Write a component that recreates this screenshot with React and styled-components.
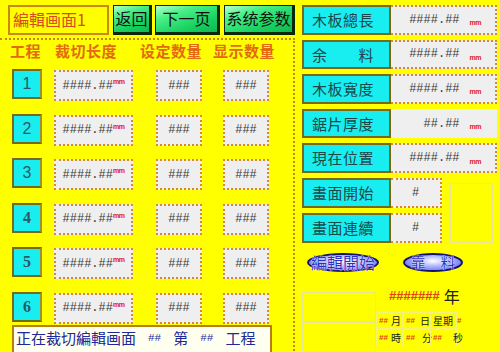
import React from 'react'
import styled, { createGlobalStyle } from 'styled-components'

const GlobalStyle = createGlobalStyle`
  html, body {
    margin: 0;
    padding: 0;
    background: #ffff00;
  }
  body {
    font-family: 'Noto Sans CJK SC', 'Noto Sans CJK TC', sans-serif;
  }
`

const Screen = styled.div`
  width: 500px;
  height: 352px;
  overflow: hidden;
  display: flex;
  background: #ffff00;
`

const LeftCol = styled.div`
  width: 295px;
  flex: none;
  display: flex;
  flex-direction: column;
  padding-top: 5px;
  box-sizing: border-box;
`

const TopBar = styled.div`
  display: flex;
  height: 30px;
  padding-left: 8px;
  gap: 4px;
`

const TitleBox = styled.div`
  width: 101px;
  box-sizing: border-box;
  border: 2px solid #c88a10;
  color: #d84a20;
  font-size: 16px;
  line-height: 25px;
  padding-left: 3px;
`

const GreenButton = styled.div`
  width: ${p => p.$w}px;
  height: 30px;
  box-sizing: border-box;
  border: 1px solid #0c280c;
  border-right-width: 3px;
  border-bottom-width: 3px;
  background: linear-gradient(160deg, #b8ffd0 0%, #48f088 30%, #18d060 70%, #10b850 100%);
  color: #101010;
  font-size: 16px;
  line-height: 25px;
  text-align: center;
  white-space: nowrap;
  overflow: hidden;
`

const Panel = styled.div`
  flex: 1;
  margin-top: 3px;
  border-top: 2px dotted #c08a10;
  border-right: 2px dotted #c08a10;
  padding: 1px 0 0 12px;
  display: flex;
  flex-direction: column;
`

const HeaderRow = styled.div`
  display: grid;
  grid-template-columns: 45px 85px 73px auto;
  margin-left: -2px;
  height: 20px;
  line-height: 20px;
  font-size: 15px;
  font-weight: bold;
  color: #e36a12;
  letter-spacing: 0.5px;
`

const Rows = styled.div`
  display: flex;
  flex-direction: column;
  gap: 14.6px;
  margin-top: 8px;
`

const Row = styled.div`
  display: grid;
  grid-template-columns: 42px 102px 67px 46px;
  height: 30px;
`

const NumBox = styled.div`
  width: 30px;
  height: 30px;
  box-sizing: border-box;
  background: #18eef0;
  border: 2px solid #786a12;
  border-right-color: #a09030;
  color: #2a5a60;
  font-family: ${p => (p.$serif ? "'Liberation Serif', serif" : "'Liberation Sans', sans-serif")};
  font-weight: ${p => (p.$serif ? 'bold' : 'normal')};
  font-size: 16px;
  line-height: 26px;
  text-align: center;
`

const Field = styled.div`
  width: ${p => p.$w}px;
  height: 31px;
  margin-top: 1px;
  box-sizing: border-box;
  background: #efefef;
  border: 2px dotted #d88a28;
  display: flex;
  align-items: center;
  justify-content: center;
  font-family: 'Liberation Mono', monospace;
  font-size: 12px;
  color: #3a3a3a;
`

const Unit = styled.span`
  font-family: 'Liberation Sans', sans-serif;
  font-size: 7px;
  font-weight: bold;
  color: #e02020;
  letter-spacing: -0.5px;
  align-self: ${p => (p.$low ? 'center' : 'flex-start')};
  margin-top: 6px;
  margin-left: ${p => p.$gap || 0}px;
`

const StatusBar = styled.div`
  margin-top: 3px;
  width: 260px;
  height: 30px;
  flex: none;
  box-sizing: border-box;
  border: 2px solid #b87c10;
  background: #fffff0;
  color: #20289a;
  font-size: 15px;
  line-height: 22px;
  padding-left: 2px;
  display: flex;
  align-items: flex-start;
  white-space: nowrap;
`

const Hash = styled.span`
  font-family: 'Liberation Mono', monospace;
  font-size: 11px;
  color: #20289a;
  margin: 0 12px;
`

const RightCol = styled.div`
  flex: 1;
  display: flex;
  flex-direction: column;
  padding: 5px 0 0 7px;
  gap: 5px;
`

const InfoRow = styled.div`
  display: flex;
  height: 30px;
`

const Label = styled.div`
  width: 89px;
  flex: none;
  box-sizing: border-box;
  background: #18eef0;
  border: 2px solid #786a12;
  color: #1e4848;
  font-size: 15px;
  letter-spacing: 0.5px;
  padding-left: 8px;
  line-height: 25px;
  white-space: pre;
`

const Value = styled.div`
  width: ${p => p.$w}px;
  flex: none;
  box-sizing: border-box;
  background: #efefef;
  border: 2px dotted ${p => (p.$plain ? '#efefef' : '#d88a28')};
  border-left: none;
  display: flex;
  align-items: center;
  justify-content: ${p => (p.$center ? 'center' : 'flex-end')};
  padding-right: ${p => (p.$center ? 0 : 14)}px;
  font-family: 'Liberation Mono', monospace;
  font-size: 12px;
  color: #3a3a3a;
`

const SplitBlock = styled.div`
  display: flex;
  gap: 8px;
`

const StackRows = styled.div`
  display: flex;
  flex-direction: column;
  gap: 5px;
`

const GhostBox = styled.div`
  width: ${p => p.$w}px;
  height: ${p => p.$h}px;
  margin-top: ${p => p.$top || 0}px;
  box-sizing: border-box;
  border: 1px solid #e6e69a;
`

const OvalRow = styled.div`
  display: flex;
  gap: 24px;
  padding-left: 5px;
  margin-top: 5px;
`

const Oval = styled.div`
  width: ${p => p.$w}px;
  height: 19px;
  box-sizing: border-box;
  border-radius: 50%;
  border: 2px solid #121270;
  background: radial-gradient(ellipse at 50% 40%, #ffffff 0%, #b8c0ff 35%, #5058e8 100%);
  color: #3030c0;
  font-size: ${p => p.$fs}px;
  line-height: 14px;
  text-align: center;
  white-space: pre;
  text-shadow: 0 0 1px #ffffff, 0 0 1px #ffffff;
`

const DateArea = styled.div`
  display: grid;
  grid-template-columns: 74px auto;
  margin-top: 9px;
`

const GhostCol = styled.div`
  display: flex;
  flex-direction: column;
  padding-top: 6px;
`

const DateCol = styled.div`
  display: flex;
  flex-direction: column;
`

const YearLine = styled.div`
  height: 20px;
  padding-left: 13px;
  display: flex;
  align-items: center;
  white-space: nowrap;
`

const YearHash = styled.span`
  font-family: 'Liberation Sans', sans-serif;
  font-size: 13px;
  font-weight: bold;
  color: #e04418;
`

const YearChar = styled.span`
  font-size: 16px;
  color: #202020;
  margin-left: 4px;
`

const TimeRow = styled.div`
  display: grid;
  grid-template-columns: 27px 27px 27px;
  height: 17px;
  margin-top: ${p => p.$top || 0}px;
`

const TimeCell = styled.div`
  display: flex;
  align-items: center;
  padding-left: 2px;
  white-space: nowrap;
  border: 1px solid #f2f27a;
`

const TinyHash = styled.span`
  font-family: 'Liberation Sans', sans-serif;
  font-size: 8px;
  font-weight: bold;
  color: #e04418;
  margin: ${p => p.$m || '0 3px 0 0'};
`

const TimeChar = styled.span`
  font-size: 10px;
  color: #202020;
  margin-left: ${p => p.$ml || 0}px;
`

const rows = [1, 2, 3, 4, 5, 6]

export default function App() {
  return (
    <>
      <GlobalStyle />
      <Screen>
        <LeftCol>
          <TopBar>
            <TitleBox>編輯画面1</TitleBox>
            <GreenButton $w={39}>返回</GreenButton>
            <GreenButton $w={65} style={{ marginLeft: -1 }}>下一页</GreenButton>
            <GreenButton $w={71}>系统参数</GreenButton>
          </TopBar>
          <Panel>
            <HeaderRow>
              <span>工程</span>
              <span>裁切长度</span>
              <span>设定数量</span>
              <span>显示数量</span>
            </HeaderRow>
            <Rows>
              {rows.map(n => (
                <Row key={n}>
                  <NumBox $serif={n > 3}>{n}</NumBox>
                  <Field $w={79}>
                    ####.##<Unit>mm</Unit>
                  </Field>
                  <Field $w={46}>###</Field>
                  <Field $w={46}>###</Field>
                </Row>
              ))}
            </Rows>
            <StatusBar>
              正在裁切編輯画面<Hash>##</Hash>第<Hash>##</Hash>工程
            </StatusBar>
          </Panel>
        </LeftCol>
        <RightCol>
          <InfoRow>
            <Label>木板總長</Label>
            <Value $w={106}>####.##<Unit $low $gap={10}>mm</Unit></Value>
          </InfoRow>
          <InfoRow>
            <Label>余　　料</Label>
            <Value $w={106}>####.##<Unit $low $gap={10}>mm</Unit></Value>
          </InfoRow>
          <InfoRow>
            <Label>木板寬度</Label>
            <Value $w={106}>####.##<Unit $low $gap={10}>mm</Unit></Value>
          </InfoRow>
          <InfoRow>
            <Label>鋸片厚度</Label>
            <Value $w={106} $plain>##.##<Unit $low $gap={10}>mm</Unit></Value>
          </InfoRow>
          <InfoRow>
            <Label>現在位置</Label>
            <Value $w={106}>####.##<Unit $low $gap={10}>mm</Unit></Value>
          </InfoRow>
          <SplitBlock>
            <StackRows>
              <InfoRow>
                <Label>畫面開始</Label>
                <Value $w={51} $center>#</Value>
              </InfoRow>
              <InfoRow>
                <Label>畫面連續</Label>
                <Value $w={51} $center>#</Value>
              </InfoRow>
            </StackRows>
            <GhostBox $w={43} $h={60} $top={5} />
          </SplitBlock>
          <OvalRow>
            <Oval $w={72} $fs={16}>編輯開始</Oval>
            <Oval $w={60} $fs={15}>{'靠　料'}</Oval>
          </OvalRow>
          <DateArea>
            <GhostCol>
              <GhostBox $w={74} $h={30} />
              <GhostBox $w={74} $h={30} />
            </GhostCol>
            <DateCol>
              <YearLine>
                <YearHash>#######</YearHash>
                <YearChar>年</YearChar>
              </YearLine>
              <TimeRow $top={6}>
                <TimeCell><TinyHash>##</TinyHash><TimeChar>月</TimeChar></TimeCell>
                <TimeCell><TinyHash>##</TinyHash><TimeChar $ml={2}>日</TimeChar></TimeCell>
                <TimeCell><TimeChar>星期</TimeChar><TinyHash $m="0 0 0 4px">#</TinyHash></TimeCell>
              </TimeRow>
              <TimeRow>
                <TimeCell><TinyHash>##</TinyHash><TimeChar>時</TimeChar></TimeCell>
                <TimeCell><TinyHash>##</TinyHash><TimeChar $ml={4}>分</TimeChar></TimeCell>
                <TimeCell><TinyHash>##</TinyHash><TimeChar $ml={8}>秒</TimeChar></TimeCell>
              </TimeRow>
            </DateCol>
          </DateArea>
        </RightCol>
      </Screen>
    </>
  )
}
